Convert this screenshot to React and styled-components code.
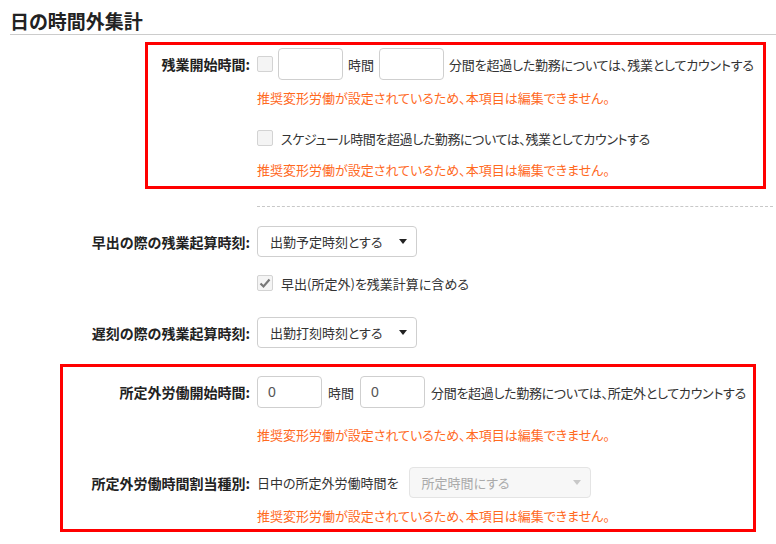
import React from "react";
import styled, { createGlobalStyle } from "styled-components";

const Global = createGlobalStyle`
  html, body { margin: 0; padding: 0; background: #fff; }
  body {
    font-family: "Noto Sans CJK JP", "Noto Sans", sans-serif;
    font-feature-settings: "palt";
    color: #333;
    font-size: 13px;
  }
`;

const Page = styled.div`
  padding: 0 0 0 10px;
  width: 766px;
`;

const Heading = styled.h2`
  margin: 0;
  padding-top: 8px;
  line-height: 26px;
  font-size: 19px;
  font-weight: 700;
  color: #222;
  border-bottom: 1px solid #ccc;
`;

const Highlight = styled.section`
  position: relative;
  margin-top: ${(p) => p.$mt}px;
  padding-top: ${(p) => p.$pt}px;
  padding-bottom: ${(p) => p.$pb}px;
  &::after {
    content: "";
    position: absolute;
    top: 0;
    bottom: 0;
    left: ${(p) => p.$left}px;
    right: ${(p) => p.$right}px;
    border: 3px solid #ff0000;
    pointer-events: none;
  }
`;

const Plain = styled.section`
  margin-top: ${(p) => p.$mt || 0}px;
`;

const Row = styled.div`
  display: grid;
  grid-template-columns: 240px 1fr;
  column-gap: 7px;
  align-items: center;
  margin-top: ${(p) => p.$mt || 0}px;
  min-height: ${(p) => p.$h || 18}px;
`;

const Label = styled.div`
  text-align: right;
  font-weight: 700;
  font-size: 14px;
  color: #222;
`;

const Field = styled.div`
  grid-column: 2;
  display: flex;
  align-items: center;
  gap: ${(p) => p.$gap || 6}px;
  white-space: nowrap;
`;

const Text = styled.span`
  font-size: 13px;
  color: #333;
  letter-spacing: ${(p) => p.$ls || 0}px;
`;

const Warning = styled.div`
  grid-column: 2;
  color: #ff6a1f;
  font-size: 13px;
  line-height: 18px;
  white-space: nowrap;
`;

const TextInput = styled.div`
  box-sizing: border-box;
  width: 65px;
  height: 32px;
  border: 1px solid #cfcfcf;
  border-radius: 4px;
  background: #fff;
  padding-left: 10px;
  display: flex;
  align-items: center;
  font-family: "Liberation Sans", Arial, sans-serif;
  font-size: 14px;
  color: #555;
`;

const Box = styled.span`
  box-sizing: border-box;
  width: 16px;
  height: 16px;
  border: 1px solid #d3d3d3;
  border-radius: 2px;
  background: #f4f4f4;
  display: inline-flex;
  align-items: center;
  justify-content: center;
  flex: none;
`;

const CheckLabel = styled.label`
  display: flex;
  align-items: center;
  gap: 8px;
  font-size: 13px;
  color: #333;
  letter-spacing: ${(p) => p.$ls || 0}px;
`;

const Select = styled.div`
  box-sizing: border-box;
  width: ${(p) => p.$w}px;
  height: 31px;
  border: 1px solid ${(p) => (p.$disabled ? "#e4e4e4" : "#cfcfcf")};
  border-radius: 4px;
  background: ${(p) => (p.$disabled ? "#f7f7f7" : "#fff")};
  color: ${(p) => (p.$disabled ? "#aaa" : "#333")};
  display: flex;
  align-items: center;
  justify-content: space-between;
  padding: 0 9px 0 12px;
  font-size: 13px;
`;

const Caret = styled.span`
  width: 0;
  height: 0;
  border-left: 4.5px solid transparent;
  border-right: 4.5px solid transparent;
  border-top: 5px solid ${(p) => (p.$disabled ? "#c8c8c8" : "#222")};
`;

const Dashed = styled.div`
  margin: 17px 3px 0 247px;
  border-top: 1px dashed #c8c8c8;
`;

const Check = () => (
  <svg width="12" height="12" viewBox="0 0 12 12">
    <path d="M1.5 6.5 L4.5 9.5 L10.5 2.5" fill="none" stroke="#777" strokeWidth="2.2" />
  </svg>
);

const Checkbox = ({ checked, ls, children }) => (
  <CheckLabel $ls={ls}>
    <Box>{checked && <Check />}</Box>
    {children && <span>{children}</span>}
  </CheckLabel>
);

const WARN = "推奨変形労働が設定されているため、本項目は編集できません。";

export default function App() {
  return (
    <>
      <Global />
      <Page>
        <Heading>日の時間外集計</Heading>

        <Highlight $mt={7} $pt={6} $pb={10} $left={135} $right={10}>
          <Row $h={32}>
            <Label>残業開始時間:</Label>
            <Field $gap={5}>
              <Box />
              <TextInput />
              <Text>時間</Text>
              <TextInput />
              <Text $ls={-0.2}>分間を超過した勤務については、残業としてカウントする</Text>
            </Field>
          </Row>
          <Row $mt={9}>
            <Warning>{WARN}</Warning>
          </Row>
          <Row $mt={21} $h={20}>
            <Field>
              <Checkbox ls={-0.4}>スケジュール時間を超過した勤務については、残業としてカウントする</Checkbox>
            </Field>
          </Row>
          <Row $mt={13}>
            <Warning>{WARN}</Warning>
          </Row>
        </Highlight>

        <Dashed />

        <Plain $mt={19}>
          <Row $h={31}>
            <Label>早出の際の残業起算時刻:</Label>
            <Field>
              <Select $w={160}>
                <span>出勤予定時刻とする</span>
                <Caret />
              </Select>
            </Field>
          </Row>
          <Row $mt={16} $h={20}>
            <Field>
              <Checkbox checked>早出(所定外)を残業計算に含める</Checkbox>
            </Field>
          </Row>
          <Row $mt={24} $h={31}>
            <Label>遅刻の際の残業起算時刻:</Label>
            <Field>
              <Select $w={160}>
                <span>出勤打刻時刻とする</span>
                <Caret />
              </Select>
            </Field>
          </Row>
        </Plain>

        <Highlight $mt={16} $pt={12} $pb={7} $left={50} $right={20}>
          <Row $h={32}>
            <Label>所定外労働開始時間:</Label>
            <Field>
              <TextInput>0</TextInput>
              <Text>時間</Text>
              <TextInput>0</TextInput>
              <Text $ls={-0.3}>分間を超過した勤務については、所定外としてカウントする</Text>
            </Field>
          </Row>
          <Row $mt={18}>
            <Warning>{WARN}</Warning>
          </Row>
          <Row $mt={23} $h={31}>
            <Label>所定外労働時間割当種別:</Label>
            <Field $gap={10}>
              <Text>日中の所定外労働時間を</Text>
              <Select $w={182} $disabled>
                <span>所定時間にする</span>
                <Caret $disabled />
              </Select>
            </Field>
          </Row>
          <Row $mt={9}>
            <Warning>{WARN}</Warning>
          </Row>
        </Highlight>
      </Page>
    </>
  );
}
